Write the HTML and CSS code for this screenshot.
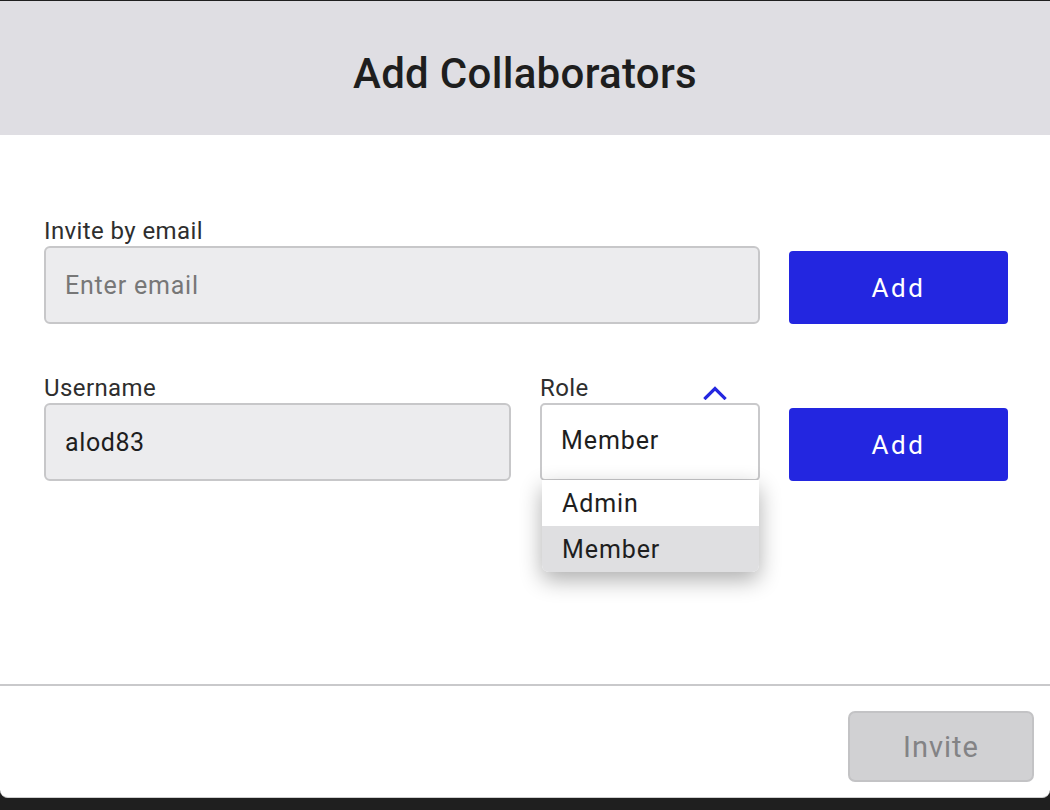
FILE: index.html
```html
<!DOCTYPE html>
<html lang="en">
<head>
<meta charset="utf-8">
<title>Add Collaborators</title>
<link rel="stylesheet" href="styles.css">
</head>
<body>
<div class="modal">
  <header class="modal-header">
    <h1 class="modal-title">Add Collaborators</h1>
  </header>
  <main class="modal-body">
    <div class="form-grid">
      <div class="field field-email">
        <label class="field-label">Invite by email</label>
        <div class="input input-placeholder">Enter email</div>
      </div>
      <button class="btn-add">Add</button>

      <div class="field">
        <label class="field-label">Username</label>
        <div class="input">alod83</div>
      </div>
      <div class="field field-role">
        <label class="field-label">Role</label>
        <svg class="chevron" width="24" height="14" viewBox="0 0 24 14"><polyline points="2.5,12 12,2.5 21.5,12" fill="none" stroke="#2427e0" stroke-width="3.2" stroke-linecap="square"/></svg>
        <div class="select">Member</div>
        <ul class="dropdown">
          <li class="dropdown-item">Admin</li>
          <li class="dropdown-item is-selected">Member</li>
        </ul>
      </div>
      <button class="btn-add">Add</button>
    </div>
  </main>
  <footer class="modal-footer">
    <button class="btn-invite" disabled>Invite</button>
  </footer>
</div>
</body>
</html>
```
FILE: styles.css
```css
* { box-sizing: border-box; }
html, body { margin: 0; padding: 0; }
body {
  background: #1f1f1f;
  font-family: Roboto, "Liberation Sans", Arial, sans-serif;
  color: #222;
  height: 810px;
  overflow: hidden;
}
.modal {
  margin-top: 1px;
  height: 797px;
  background: #fff;
  border-bottom: 1px solid #cfcfcf;
  border-radius: 0 0 8px 8px;
  display: flex;
  flex-direction: column;
  overflow: hidden;
}
.modal-header {
  height: 134px;
  background: #dfdee3;
  display: flex;
  align-items: center;
  justify-content: center;
  padding-top: 10px;
}
.modal-title {
  margin: 0;
  font-size: 42px;
  font-weight: 500;
  letter-spacing: 0.3px;
  color: #1e1e1e;
}
.modal-body {
  height: 551px;
  padding: 83px 42px 0 44px;
  border-bottom: 2px solid #c9c9cb;
}
.form-grid {
  display: grid;
  grid-template-columns: 467px 220px 219px;
  column-gap: 29px;
  row-gap: 51px;
  align-items: end;
}
.field {
  display: flex;
  flex-direction: column;
  position: relative;
}
.field-email { grid-column: 1 / 3; }
.field-label {
  font-size: 24px;
  line-height: 27px;
  margin-bottom: 1px;
  color: #2e2e2e;
  letter-spacing: 0.4px;
}
.input {
  height: 78px;
  background: #ececee;
  border: 2px solid #c7c7c9;
  border-radius: 6px;
  padding-left: 19px;
  display: flex;
  align-items: center;
  font-size: 25px;
  color: #1e1e1e;
  letter-spacing: 0.6px;
}
.input-placeholder { color: #777; letter-spacing: 0.8px; }
.select {
  height: 78px;
  background: #fff;
  border: 2px solid #c9c9cb;
  border-radius: 5px;
  padding-left: 19px;
  padding-bottom: 3px;
  display: flex;
  align-items: center;
  font-size: 25px;
  color: #1e1e1e;
  letter-spacing: 0.9px;
}
.chevron {
  position: absolute;
  left: 163px;
  top: 11px;
}
.dropdown {
  position: absolute;
  top: 105px;
  left: 2px;
  width: 217px;
  margin: 0;
  padding: 0;
  list-style: none;
  background: #fff;
  border-radius: 0 0 7px 7px;
  box-shadow: 0 8px 22px rgba(0,0,0,0.32);
  overflow: hidden;
  z-index: 2;
}
.dropdown-item {
  height: 46px;
  padding-left: 20px;
  display: flex;
  align-items: center;
  font-size: 25px;
  color: #1e1e1e;
  letter-spacing: 0.9px;
}
.dropdown-item.is-selected { background: #dfdfe1; height: 46px; }
.btn-add {
  height: 73px;
  border: none;
  border-radius: 4px;
  background: #2326e0;
  color: #fff;
  font-family: Roboto, "Liberation Sans", Arial, sans-serif;
  font-size: 26px;
  font-weight: 400;
  letter-spacing: 2.5px;
  cursor: pointer;
}
.modal-footer {
  flex: 1;
  display: flex;
  justify-content: flex-end;
  align-items: flex-start;
  padding: 25px 16px 0 0;
}
.btn-invite {
  width: 186px;
  height: 71px;
  background: #d1d1d3;
  border: 2px solid #c3c3c5;
  border-radius: 7px;
  color: #838385;
  font-family: Roboto, "Liberation Sans", Arial, sans-serif;
  font-size: 29px;
  letter-spacing: 1px;
}
```
